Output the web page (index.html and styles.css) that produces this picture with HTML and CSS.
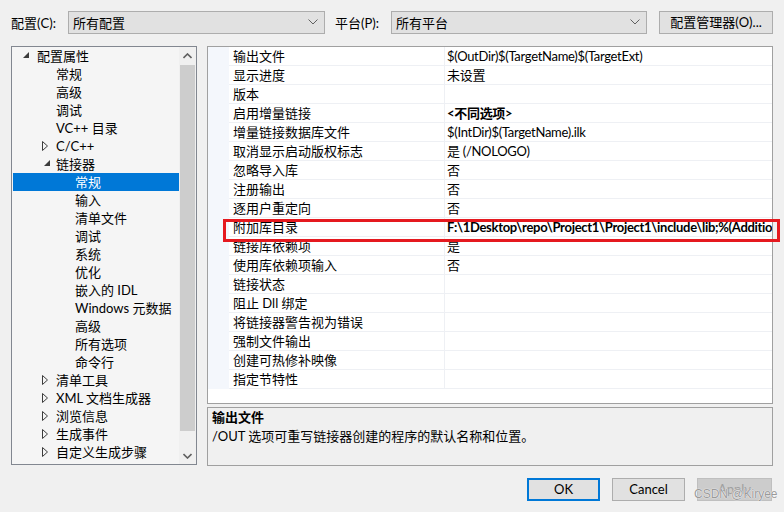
FILE: index.html
```html
<!DOCTYPE html>
<html lang="zh-CN">
<head>
<meta charset="utf-8">
<title>属性页</title>
<link rel="stylesheet" href="styles.css">
</head>
<body>
<div class="page">
  <div class="topbar">
    <span class="lbl lbl-config">配置(C):</span>
    <div class="combo combo-config"><span>所有配置</span>
      <svg class="chev" width="10" height="6" viewBox="0 0 10 6"><path d="M0.5 0.5 L5 5 L9.5 0.5" fill="none" stroke="#606060" stroke-width="1"/></svg>
    </div>
    <span class="lbl lbl-plat">平台(P):</span>
    <div class="combo combo-plat"><span>所有平台</span>
      <svg class="chev" width="10" height="6" viewBox="0 0 10 6"><path d="M0.5 0.5 L5 5 L9.5 0.5" fill="none" stroke="#606060" stroke-width="1"/></svg>
    </div>
    <div class="btn btn-mgr">配置管理器(O)...</div>
  </div>

  <div class="main">
    <div class="treepanel">
      <div class="tree">
        <div class="node l0"><span class="tog"><svg width="7" height="7" viewBox="0 0 7 7"><path d="M6 0 L6 6 L0 6 Z" fill="#3c3c3c"/></svg></span>配置属性</div>
        <div class="node l1"><span class="tog"></span>常规</div>
        <div class="node l1"><span class="tog"></span>高级</div>
        <div class="node l1"><span class="tog"></span>调试</div>
        <div class="node l1"><span class="tog"></span>VC++ 目录</div>
        <div class="node l1"><span class="tog"><svg width="6" height="10" viewBox="0 0 6 10"><path d="M0.5 0.5 L5.5 5 L0.5 9.5 Z" fill="none" stroke="#3c3c3c" stroke-width="1"/></svg></span>C/C++</div>
        <div class="node l1"><span class="tog tog-exp"><svg width="7" height="7" viewBox="0 0 7 7"><path d="M6 0 L6 6 L0 6 Z" fill="#3c3c3c"/></svg></span>链接器</div>
        <div class="node l2 sel"><span class="tog"></span>常规</div>
        <div class="node l2"><span class="tog"></span>输入</div>
        <div class="node l2"><span class="tog"></span>清单文件</div>
        <div class="node l2"><span class="tog"></span>调试</div>
        <div class="node l2"><span class="tog"></span>系统</div>
        <div class="node l2"><span class="tog"></span>优化</div>
        <div class="node l2"><span class="tog"></span>嵌入的 IDL</div>
        <div class="node l2"><span class="tog"></span>Windows 元数据</div>
        <div class="node l2"><span class="tog"></span>高级</div>
        <div class="node l2"><span class="tog"></span>所有选项</div>
        <div class="node l2"><span class="tog"></span>命令行</div>
        <div class="node l1"><span class="tog"><svg width="6" height="10" viewBox="0 0 6 10"><path d="M0.5 0.5 L5.5 5 L0.5 9.5 Z" fill="none" stroke="#3c3c3c" stroke-width="1"/></svg></span>清单工具</div>
        <div class="node l1"><span class="tog"><svg width="6" height="10" viewBox="0 0 6 10"><path d="M0.5 0.5 L5.5 5 L0.5 9.5 Z" fill="none" stroke="#3c3c3c" stroke-width="1"/></svg></span>XML 文档生成器</div>
        <div class="node l1"><span class="tog"><svg width="6" height="10" viewBox="0 0 6 10"><path d="M0.5 0.5 L5.5 5 L0.5 9.5 Z" fill="none" stroke="#3c3c3c" stroke-width="1"/></svg></span>浏览信息</div>
        <div class="node l1"><span class="tog"><svg width="6" height="10" viewBox="0 0 6 10"><path d="M0.5 0.5 L5.5 5 L0.5 9.5 Z" fill="none" stroke="#3c3c3c" stroke-width="1"/></svg></span>生成事件</div>
        <div class="node l1"><span class="tog"><svg width="6" height="10" viewBox="0 0 6 10"><path d="M0.5 0.5 L5.5 5 L0.5 9.5 Z" fill="none" stroke="#3c3c3c" stroke-width="1"/></svg></span>自定义生成步骤</div>
      </div>
      <div class="vscroll">
        <div class="arrow"><svg width="9" height="6" viewBox="0 0 9 6"><path d="M0.5 5 L4.5 1 L8.5 5" fill="none" stroke="#606060" stroke-width="1.6"/></svg></div>
        <div class="track"><div class="thumb"></div></div>
        <div class="arrow"><svg width="9" height="6" viewBox="0 0 9 6"><path d="M0.5 1 L4.5 5 L8.5 1" fill="none" stroke="#606060" stroke-width="1.6"/></svg></div>
      </div>
    </div>

    <div class="rightcol">
      <div class="grid">
        <div class="row"><div class="gut"></div><div class="name">输出文件</div><div class="val">$(OutDir)$(TargetName)$(TargetExt)</div></div>
        <div class="row"><div class="gut"></div><div class="name">显示进度</div><div class="val">未设置</div></div>
        <div class="row"><div class="gut"></div><div class="name">版本</div><div class="val"></div></div>
        <div class="row"><div class="gut"></div><div class="name">启用增量链接</div><div class="val b">&lt;不同选项&gt;</div></div>
        <div class="row"><div class="gut"></div><div class="name">增量链接数据库文件</div><div class="val">$(IntDir)$(TargetName).ilk</div></div>
        <div class="row"><div class="gut"></div><div class="name">取消显示启动版权标志</div><div class="val">是 (/NOLOGO)</div></div>
        <div class="row"><div class="gut"></div><div class="name">忽略导入库</div><div class="val">否</div></div>
        <div class="row"><div class="gut"></div><div class="name">注册输出</div><div class="val">否</div></div>
        <div class="row"><div class="gut"></div><div class="name">逐用户重定向</div><div class="val">否</div></div>
        <div class="row"><div class="gut"></div><div class="name">附加库目录</div><div class="val b">F:\1Desktop\repo\Project1\Project1\include\lib;%(AdditionalLibraryDirectories)</div></div>
        <div class="row"><div class="gut"></div><div class="name">链接库依赖项</div><div class="val">是</div></div>
        <div class="row"><div class="gut"></div><div class="name">使用库依赖项输入</div><div class="val">否</div></div>
        <div class="row"><div class="gut"></div><div class="name">链接状态</div><div class="val"></div></div>
        <div class="row"><div class="gut"></div><div class="name">阻止 Dll 绑定</div><div class="val"></div></div>
        <div class="row"><div class="gut"></div><div class="name">将链接器警告视为错误</div><div class="val"></div></div>
        <div class="row"><div class="gut"></div><div class="name">强制文件输出</div><div class="val"></div></div>
        <div class="row"><div class="gut"></div><div class="name">创建可热修补映像</div><div class="val"></div></div>
        <div class="row"><div class="gut"></div><div class="name">指定节特性</div><div class="val"></div></div>
      </div>
      <div class="desc">
        <div class="desc-title">输出文件</div>
        <div class="desc-text">/OUT 选项可重写链接器创建的程序的默认名称和位置。</div>
      </div>
    </div>
  </div>

  <div class="buttons">
    <div class="btn btn-dlg btn-ok">OK</div>
    <div class="btn btn-dlg">Cancel</div>
    <div class="btn btn-dlg btn-dis">Apply</div>
  </div>

  <div class="highlight"></div>
  <div class="watermark">CSDN @Kiryee</div>
</div>
</body>
</html>
```

FILE: styles.css
```css
* { box-sizing: border-box; }
html, body { margin: 0; padding: 0; }
body {
  background: #f0f0f0;
  font-family: "Lato", "Noto Sans CJK SC", sans-serif;
  font-size: 13px;
  color: #000;
  width: 784px;
  height: 512px;
  overflow: hidden;
}
.page { position: relative; width: 784px; height: 512px; }

.topbar {
  display: flex;
  align-items: center;
  height: 45px;
  padding: 0 0 0 11px;
}
.lbl { white-space: nowrap; padding-bottom: 1px; }
.lbl-config { width: 57px; }
.lbl-plat { margin-left: 10px; width: 56px; }
.combo {
  height: 23px;
  background: #e1e1e1;
  border: 1px solid #adadad;
  display: flex;
  align-items: center;
  justify-content: space-between;
  padding: 0 6px 1px 4px;
}
.combo-config { width: 257px; }
.combo-plat { width: 256px; }
.btn {
  background: #e1e1e1;
  border: 1px solid #adadad;
  display: flex;
  align-items: center;
  justify-content: center;
  white-space: nowrap;
  padding-bottom: 1px;
}
.btn-mgr { width: 114px; height: 23px; margin-left: 12px; margin-top: -1px; }

.main {
  display: flex;
  padding-left: 11px;
  margin-top: 1px;
  gap: 10px;
}
.treepanel {
  width: 186px;
  height: 419px;
  border: 1px solid #828790;
  background: #f5f5f5;
  display: flex;
}
.tree { width: 167px; padding-left: 1px; }
.node {
  height: 18px;
  display: flex;
  align-items: center;
  white-space: nowrap;
  padding-bottom: 1px;
}
.node.l0 { padding-left: 5px; }
.node.l1 { padding-left: 24px; }
.node.l2 { padding-left: 43px; }
.node.sel { background: #0078d7; color: #fff; }
.tog { width: 19px; display: flex; align-items: center; padding-left: 5px; }
.tog-exp { padding-left: 7px; }
.vscroll {
  width: 17px;
  display: flex;
  flex-direction: column;
  background: #f0f0f0;
}
.arrow { height: 17px; display: flex; align-items: center; justify-content: center; }
.track { flex: 1; padding: 1px 1px; display: flex; flex-direction: column; }
.thumb { height: 366px; background: #cdcdcd; }

.rightcol { display: flex; flex-direction: column; gap: 3px; }
.grid {
  width: 566px;
  height: 358px;
  border: 1px solid #a0a0a0;
  background: #fff;
  overflow: hidden;
}
.row { display: flex; height: 19px; }
.gut { width: 21px; background: #f4f7fc; }
.name {
  width: 215px;
  padding-left: 4px;
  padding-bottom: 1px;
  border-bottom: 1px solid #eef0f4;
  display: flex;
  align-items: center;
  white-space: nowrap;
}
.val {
  flex: 1;
  border-left: 1px solid #eef0f4;
  border-bottom: 1px solid #eef0f4;
  padding-left: 2px;
  padding-bottom: 1px;
  display: flex;
  align-items: center;
  white-space: nowrap;
  overflow: hidden;
  letter-spacing: -0.3px;
}
.val.b { font-weight: bold; }
.desc {
  width: 566px;
  height: 59px;
  border: 1px solid #a0a0a0;
  background: #f0f0f0;
  padding: 0 4px;
}
.desc-title { font-weight: bold; height: 19px; line-height: 18px; }
.desc-text { height: 19px; line-height: 18px; }

.buttons {
  display: flex;
  justify-content: flex-end;
  gap: 12px;
  padding-right: 12px;
  margin-top: 12px;
}
.btn-dlg { width: 73px; height: 23px; }
.btn-ok { border: 2px solid #0078d7; }
.btn-dis { width: 75px; background: #cccccc; border-color: #bfbfbf; color: #a0a0a0; }

.highlight {
  position: absolute;
  left: 223px;
  top: 219px;
  width: 557px;
  height: 23px;
  border: 3px solid #e5191f;
}
.watermark {
  position: absolute;
  left: 694px;
  top: 487px;
  font-family: "Liberation Sans", sans-serif;
  font-size: 12px;
  color: #9a9a9a;
  text-shadow: 0 0 1px #fff, 0 0 1px #fff;
}
```
